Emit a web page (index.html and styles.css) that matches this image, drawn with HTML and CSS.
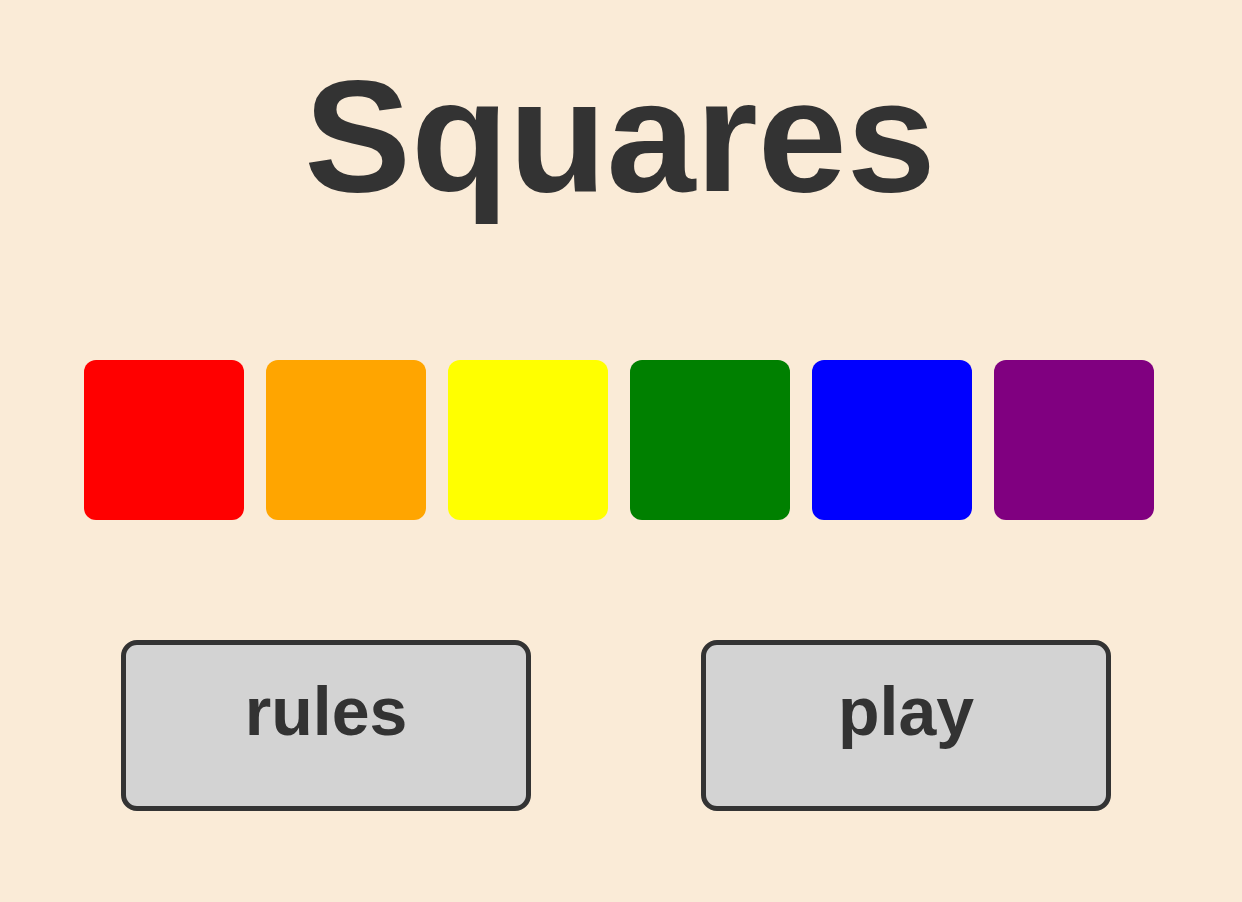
FILE: index.html
```html
<!DOCTYPE html>
<html lang="en">
<head>
<meta charset="utf-8">
<title>Squares</title>
<link rel="stylesheet" href="styles.css">
</head>
<body>
<main class="page">
  <h1 class="title">Squares</h1>
  <div class="squares">
    <div class="square red"></div>
    <div class="square orange"></div>
    <div class="square yellow"></div>
    <div class="square green"></div>
    <div class="square blue"></div>
    <div class="square purple"></div>
  </div>
  <div class="buttons">
    <button class="btn">rules</button>
    <button class="btn">play</button>
  </div>
</main>
</body>
</html>
```

FILE: styles.css
```css
html, body {
  margin: 0;
  padding: 0;
  background: #faebd7;
}
body {
  font-family: "Liberation Sans", Arial, sans-serif;
  color: #333333;
}
.page {
  display: flex;
  flex-direction: column;
  align-items: center;
  padding-top: 56px;
}
.title {
  margin: 0;
  font-size: 160px;
  line-height: 160px;
  font-weight: bold;
  color: #333333;
  margin-right: 2px;
}
.squares {
  display: flex;
  gap: 22px;
  margin-top: 144px;
  margin-right: 4px;
}
.square {
  width: 160px;
  height: 160px;
  border-radius: 12px;
}
.red { background: #ff0000; }
.orange { background: #ffa500; }
.yellow { background: #ffff00; }
.green { background: #008000; }
.blue { background: #0000ff; }
.purple { background: #800080; }
.buttons {
  display: flex;
  gap: 170px;
  margin-top: 120px;
  margin-right: 10px;
}
.btn {
  box-sizing: border-box;
  width: 410px;
  height: 171px;
  border: 5px solid #333333;
  border-radius: 16px;
  background: #d3d3d3;
  color: #333333;
  font-family: "Liberation Sans", Arial, sans-serif;
  font-weight: bold;
  font-size: 68px;
  line-height: 80px;
  padding: 26px 0 0 0;
  display: flex;
  justify-content: center;
  align-items: flex-start;
  margin: 0;
}
```
